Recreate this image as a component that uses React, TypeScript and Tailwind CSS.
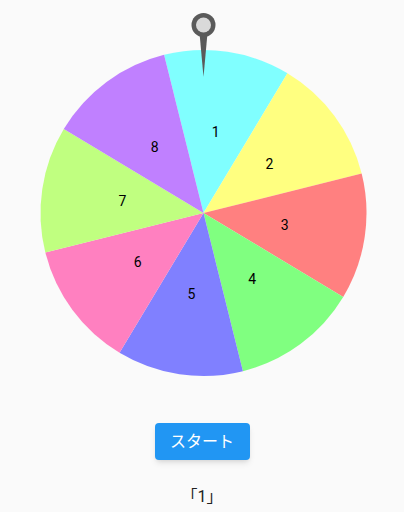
import React from 'react';

const CX = 203.5;
const CY = 213;
const R = 163;
const OFFSET = 8.5;

const segments = [
  { label: '1', color: '#80ffff' },
  { label: '2', color: '#ffff80' },
  { label: '3', color: '#ff8080' },
  { label: '4', color: '#80ff80' },
  { label: '5', color: '#8080ff' },
  { label: '6', color: '#ff80c0' },
  { label: '7', color: '#c0ff80' },
  { label: '8', color: '#c080ff' },
];

const pt = (deg: number, r: number) => {
  const a = (deg * Math.PI) / 180;
  return [CX + r * Math.sin(a), CY - r * Math.cos(a)];
};

const Wheel: React.FC = () => {
  return (
    <svg width={404} height={400} viewBox="0 0 404 400" className="block">
      {segments.map((s, i) => {
        const a0 = OFFSET - 22.5 + i * 45;
        const a1 = a0 + 45;
        const [x0, y0] = pt(a0, R);
        const [x1, y1] = pt(a1, R);
        return <path key={s.label} d={`M${CX} ${CY} L${x0} ${y0} A${R} ${R} 0 0 1 ${x1} ${y1} Z`} fill={s.color} />;
      })}
      {segments.map((s, i) => {
        const [lx, ly] = pt(OFFSET + i * 45, 82);
        return (
          <text
            key={s.label}
            x={lx}
            y={ly}
            textAnchor="middle"
            dominantBaseline="central"
            fontSize={14}
            fill="#000"
            style={{ fontFamily: 'Roboto, sans-serif' }}
          >
            {s.label}
          </text>
        );
      })}
      <polygon points="199.5,33 207.5,33 203.5,77" fill="#5a5a5a" />
      <circle cx={203.5} cy={25} r={12} fill="#5a5a5a" />
      <circle cx={203.5} cy={25} r={7.5} fill="#d9d9d9" />
    </svg>
  );
};

export default function App() {
  return (
    <div className="w-[404px] h-[512px] bg-[#fafafa] flex flex-col items-center overflow-hidden font-['Roboto','Noto_Sans_CJK_JP',sans-serif]">
      <Wheel />
      <button className="mt-[23px] w-[95px] h-[37px] rounded bg-[#2196f3] text-white text-base shadow-md flex items-center justify-center">
        スタート
      </button>
      <div className="mt-[25px] text-base leading-6 text-[#212121]">「1」</div>
    </div>
  );
}
